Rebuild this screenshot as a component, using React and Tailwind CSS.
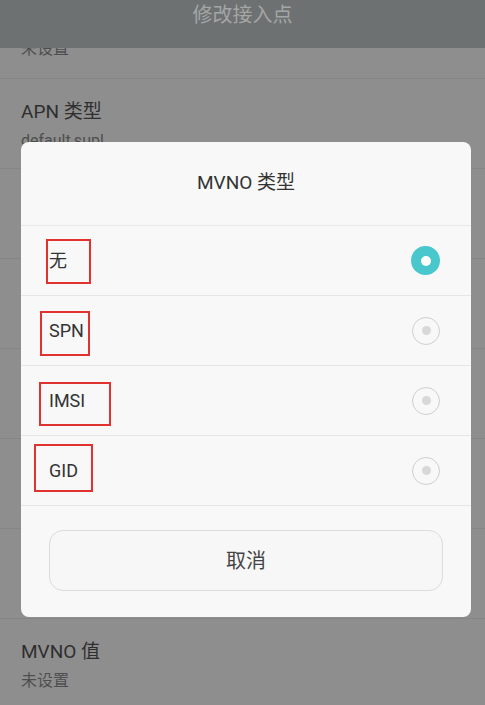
import { useState } from "react";

const font = { fontFamily: 'Roboto, "Noto Sans CJK SC", sans-serif' };

// fields on the settings page behind the dialog
const fields = [
  { title: "APN 类型", value: "default,supl" },
  { title: "APN 协议", value: "IPv4" },
  { title: "APN 漫游协议", value: "IPv4" },
  { title: "启用/停用 APN", value: "已启用" },
  { title: "承载系统", value: "未指定" },
  { title: "MVNO 类型", value: "无" },
  { title: "MVNO 值", value: "未设置" },
];

const options = [
  { label: "无", mark: "left-[25px] top-[13px] w-[45px] h-[45px]" },
  { label: "SPN", mark: "left-[19px] top-[15px] w-[50px] h-[45px]" },
  { label: "IMSI", mark: "left-[18px] top-[16px] w-[72px] h-[44px]" },
  { label: "GID", mark: "left-[13px] top-[8px] w-[59px] h-[48px]" },
];

function Radio({ checked }) {
  if (checked) {
    return (
      <div className="h-[29px] w-[29px] rounded-full bg-[#48c7cd] flex items-center justify-center">
        <div className="h-[10px] w-[10px] rounded-full bg-white" />
      </div>
    );
  }
  return (
    <div className="h-[28px] w-[28px] rounded-full border border-[#cfcfcf] flex items-center justify-center">
      <div className="h-[9px] w-[9px] rounded-full bg-[#d8d8d8]" />
    </div>
  );
}

export default function App() {
  const [selected, setSelected] = useState(0);

  return (
    <div className="relative w-[485px] h-[705px] overflow-hidden bg-[#8e8e8e]" style={font}>
      <div className="h-[48px] bg-[#6e7171] flex justify-center">
        <span className="text-[20px] leading-[30px] text-[#a3a6a6]">修改接入点</span>
      </div>

      <div className="h-[31px] overflow-hidden border-b border-[#858585] px-[21px] flex items-end pb-[19px]">
        <span className="text-[16px] leading-[20px] text-[#4e4e4e]">未设置</span>
      </div>
      {fields.map((f) => (
        <div key={f.title} className="h-[90px] border-b border-[#858585] px-[21px] pt-[19px]">
          <div className="text-[19px] leading-[28px] text-[#2e2e2e]">{f.title}</div>
          <div className="text-[16px] leading-[22px] mt-[4px] text-[#4e4e4e]">{f.value}</div>
        </div>
      ))}

      <div className="absolute left-[21px] top-[142px] w-[450px] rounded-[8px] bg-[#f8f8f8]">
        <div className="h-[84px] flex items-center justify-center border-b border-[#e8e8e8]">
          <span className="text-[19px] text-[#333]">MVNO 类型</span>
        </div>
        {options.map((o, i) => (
          <div
            key={o.label}
            onClick={() => setSelected(i)}
            className="relative h-[70px] flex items-center justify-between border-b border-[#e6e6e6] pl-[28px] pr-[31px]"
          >
            <span className="text-[18px] text-[#333]">{o.label}</span>
            <Radio checked={selected === i} />
            <div className={`absolute border-2 border-[#e0322f] ${o.mark}`} />
          </div>
        ))}
        <div className="px-[28px] pt-[24px] pb-[26px]">
          <button className="w-full h-[61px] rounded-[14px] border border-[#dcdcdc] bg-[#f7f7f7] text-[20px] text-[#444]">
            取消
          </button>
        </div>
      </div>
    </div>
  );
}
